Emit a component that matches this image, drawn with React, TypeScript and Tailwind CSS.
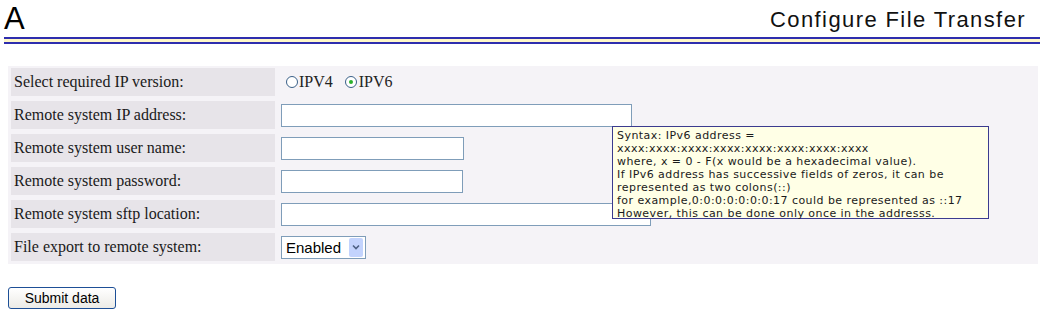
import React from "react";

const serif = { fontFamily: '"Liberation Serif", "Times New Roman", serif' };
const sans = { fontFamily: '"Liberation Sans", Arial, sans-serif' };
const verdana = { fontFamily: '"DejaVu Sans", Verdana, sans-serif' };

function Radio({ checked }: { checked?: boolean }) {
  return (
    <span className="inline-flex items-center justify-center w-[12px] h-[12px] rounded-full border border-[#3a6088] bg-white">
      {checked && <span className="w-[4px] h-[4px] rounded-full bg-[#2bb02b]" />}
    </span>
  );
}

function Row({ label, children }: { label: string; children?: React.ReactNode }) {
  return (
    <div className="flex h-[28px] items-center">
      <div
        className="w-[264px] h-full flex items-center pl-[3px] bg-[#e7e4e9] text-[16px] text-[#1a1a1a]"
        style={serif}
      >
        {label}
      </div>
      <div className="pl-[6px] flex items-center">{children}</div>
    </div>
  );
}

export default function App() {
  return (
    <div className="relative w-[1054px] h-[326px] bg-white overflow-hidden">
      <div className="flex items-start justify-between h-[37px]">
        <div className="pl-[4px] pt-[1px] text-[31px] leading-[36px] text-black" style={sans}>
          A
        </div>
        <div className="pr-[28px] pt-[7px] text-[22px] leading-[26px] tracking-[1.4px] text-[#111]" style={sans}>
          Configure File Transfer
        </div>
      </div>
      <div className="ml-[4px] w-[1036px] h-[7px] border-t-2 border-b-2 border-[#2e2eae] bg-[#fff8c8]" />
      <div className="ml-[8px] mt-[22px] w-[1030px] bg-[#f5f3f7] pl-[3px] pt-[2px] pb-[3px] flex flex-col gap-[5px]">
        <Row label="Select required IP version:">
          <div className="flex items-center text-[16px] text-[#222] pl-[5px]" style={serif}>
            <Radio />
            <span className="ml-[1px]">IPV4</span>
            <span className="ml-[12px]" />
            <Radio checked />
            <span className="ml-[2px]">IPV6</span>
          </div>
        </Row>
        <Row label="Remote system IP address:">
          <div className="w-[351px] h-[23px] bg-white border border-[#7f9db9]" />
        </Row>
        <Row label="Remote system user name:">
          <div className="w-[183px] h-[23px] bg-white border border-[#7f9db9]" />
        </Row>
        <Row label="Remote system password:">
          <div className="w-[182px] h-[23px] bg-white border border-[#7f9db9]" />
        </Row>
        <Row label="Remote system sftp location:">
          <div className="w-[370px] h-[23px] bg-white border border-[#7f9db9]" />
        </Row>
        <Row label="File export to remote system:">
          <div className="w-[85px] h-[23px] bg-white border border-[#7f9db9] flex items-center justify-between pl-[4px] pr-[2px]">
            <span className="text-[15px] leading-none text-black" style={sans}>
              Enabled
            </span>
            <span className="w-[14px] h-[19px] bg-[#c3d3fd] rounded-[2px] flex items-center justify-center">
              <svg width="8" height="6" viewBox="0 0 8 6">
                <path d="M1 1.5 L4 4.5 L7 1.5" stroke="#4d6185" strokeWidth="1.6" fill="none" />
              </svg>
            </span>
          </div>
        </Row>
      </div>
      <div className="ml-[8px] mt-[21px]">
        <button
          className="w-[108px] h-[22px] rounded-[3px] border border-[#1d4f96] bg-gradient-to-b from-white to-[#ecebe6] text-[14px] leading-none text-black"
          style={sans}
        >
          Submit data
        </button>
      </div>
      <div
        className="absolute left-[612px] top-[126px] w-[377px] h-[93px] border border-[#3b3b8f] bg-[#ffffe6] pl-[4px] pt-[2px] text-[11px] leading-[13px] tracking-[0.45px] text-[#1a1a1a] whitespace-pre"
        style={verdana}
      >
        {"Syntax: IPv6 address =\nxxxx:xxxx:xxxx:xxxx:xxxx:xxxx:xxxx:xxxx\nwhere, x = 0 - F(x would be a hexadecimal value).\nIf IPv6 address has successive fields of zeros, it can be\nrepresented as two colons(::)\nfor example,0:0:0:0:0:0:0:17 could be represented as ::17\nHowever, this can be done only once in the addresss."}
      </div>
    </div>
  );
}
